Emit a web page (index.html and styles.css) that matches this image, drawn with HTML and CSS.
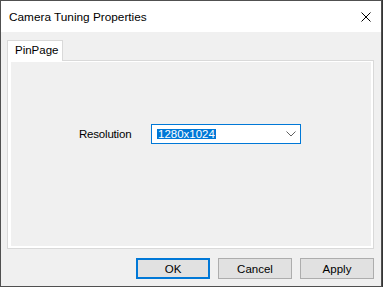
FILE: index.html
```html
<!DOCTYPE html>
<html lang="en">
<head>
    <meta charset="UTF-8">
    <title>Camera Tuning Properties</title>
    <link rel="stylesheet" href="styles.css">
</head>
<body>
    <div class="window">
        <div class="titlebar">
            <span class="titlebar__text">Camera Tuning Properties</span>
            <svg class="titlebar__close" width="10" height="10" viewBox="0 0 10 10">
                <path d="M0.5 0.5 L9.5 9.5 M9.5 0.5 L0.5 9.5" stroke="#000" stroke-width="1" fill="none"/>
            </svg>
        </div>
        <div class="content">
            <div class="tabs">
                <div class="tab">PinPage</div>
            </div>
            <div class="panel">
                <div class="page">
                    <div class="row">
                        <label class="row__label">Resolution</label>
                        <div class="combo">
                            <span class="combo__value">1280x1024</span>
                            <svg class="combo__arrow" width="10" height="6" viewBox="0 0 10 6">
                                <path d="M0.5 0.5 L5 5 L9.5 0.5" stroke="#606060" stroke-width="1" fill="none"/>
                            </svg>
                        </div>
                    </div>
                </div>
            </div>
            <div class="buttons">
                <button class="btn btn--default">OK</button>
                <button class="btn">Cancel</button>
                <button class="btn">Apply</button>
            </div>
        </div>
    </div>
</body>
</html>
```

FILE: styles.css
```css
body {
    margin: 0;
    padding: 0;
    width: 383px;
    height: 287px;
    background: #353535;
    font-family: "Liberation Sans", Arial, sans-serif;
    font-size: 11.5px;
    color: #000;
    overflow: hidden;
}
.window {
    width: 380px;
    height: 285px;
    border: 1px solid #505050;
    background: #f0f0f0;
    display: flex;
    flex-direction: column;
}
.titlebar {
    height: 31px;
    background: #fff;
    display: flex;
    align-items: center;
    justify-content: space-between;
    padding: 0 10px 0 8px;
}
.titlebar__text {
    font-size: 11.8px;
    margin-top: 1px;
}
.titlebar__close {
    display: block;
    margin-top: 1px;
}
.content {
    flex: 1;
    display: flex;
    flex-direction: column;
    padding: 8px 7px 7px 6px;
}
.tabs {
    display: flex;
    height: 20px;
}
.tab {
    width: 56px;
    height: 21px;
    box-sizing: border-box;
    background: #fff;
    border: 1px solid #d9d9d9;
    border-bottom: none;
    padding: 3px 0 0 7px;
    position: relative;
    z-index: 1;
}
.panel {
    height: 189px;
    box-sizing: border-box;
    background: #fff;
    border: 1px solid #d9d9d9;
    padding: 1px 2px 2px 3px;
    display: flex;
}
.page {
    flex: 1;
    background: #f0f0f0;
    padding: 62px 0 0 68px;
}
.row {
    display: flex;
    align-items: center;
}
.row__label {
    width: 72px;
    letter-spacing: -0.2px;
}
.combo {
    width: 150px;
    height: 20px;
    box-sizing: border-box;
    border: 1px solid #0078d7;
    background: #fff;
    display: flex;
    align-items: center;
    justify-content: space-between;
    padding: 0 4px 0 5px;
}
.combo__value {
    background: #0078d7;
    color: #fff;
    line-height: 10px;
    padding: 0 1px;
}
.combo__arrow {
    display: block;
}
.buttons {
    display: flex;
    justify-content: flex-end;
    gap: 8px;
    margin-top: 9px;
}
.btn {
    width: 74px;
    height: 21px;
    box-sizing: border-box;
    background: #e1e1e1;
    border: 1px solid #adadad;
    font-family: "Liberation Sans", Arial, sans-serif;
    font-size: 11.5px;
    color: #000;
    padding: 0;
}
.btn--default {
    border: 2px solid #0078d7;
}
```
